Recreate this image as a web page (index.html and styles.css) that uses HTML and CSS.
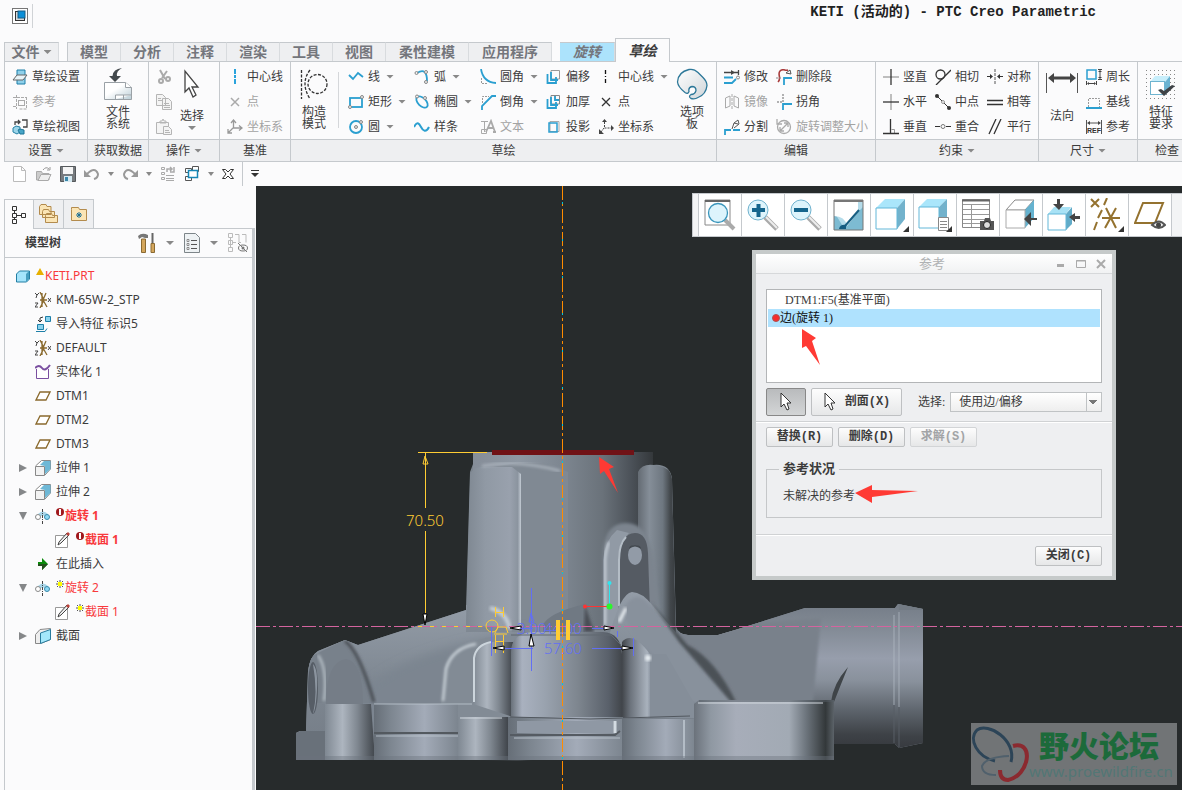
FILE: index.html
```html
<!DOCTYPE html>
<html lang="zh-CN">
<head>
    <meta charset="UTF-8">
    <meta name="viewport" content="width=device-width, initial-scale=1.0">
    <title>KETI (活动的) - PTC Creo Parametric</title>
    <link rel="stylesheet" href="styles.css">
</head>
<body>
    <header class="titlebar">
        <div class="app-icon">
            <svg width="16" height="16" viewBox="0 0 16 16"><rect x=".5" y=".5" width="15" height="15" fill="#fff" stroke="#777"/><rect x="3.5" y="3.5" width="9" height="9" fill="#d5d8da" stroke="#333"/><rect x="6" y="3" width="7" height="7" fill="#0b8fd8" stroke="#155c86"/></svg>
        </div>
        <h1>KETI (活动的) - PTC Creo Parametric</h1>
    </header>

    <!-- Ribbon tabs -->
    <nav class="tabs">
        <button class="tab tab-file">文件<i class="caret"></i></button>
        <div class="tab-set">
            <button class="tab">模型</button>
            <button class="tab">分析</button>
            <button class="tab">注释</button>
            <button class="tab">渲染</button>
            <button class="tab">工具</button>
            <button class="tab">视图</button>
            <button class="tab tab-wide">柔性建模</button>
            <button class="tab tab-wide">应用程序</button>
        </div>
        <button class="tab tab-context">旋转</button>
        <button class="tab tab-active">草绘</button>
    </nav>

    <main>
    <div class="ribbon">
        <section class="group">
            <div class="group-body">
                <div class="col">
                    <button class="cmd"><svg viewBox="0 0 16 16"><path d="M5 1h8v14H5z" fill="#8fd0ea" stroke="#1d7fa8"/><path d="M1 11 5 6h10l-4 5z" fill="#e8f4f8" stroke="#666"/></svg>草绘设置</button>
                    <button class="cmd" disabled><svg viewBox="0 0 16 16" fill="none" stroke="#aaa"><path d="M4.500 1v14M1 3.500h14M1 12.500h3M14.500 3v12h-7" stroke-dasharray="3 1"/><rect x="6.500" y="6.500" width="6" height="5"/></svg>参考</button>
                    <button class="cmd"><svg viewBox="0 0 16 16"><path d="M10 1h5v7h-4M3 6V3h5M6 1l2 2-2 2" fill="none" stroke="#444" stroke-width="1.300"/><path d="m1 9 3-2 4 1v5l-3 2-4-2z" fill="#9cd5e9" stroke="#2480a5"/><path d="m6 11 2-1 4 1v4H8z" fill="#48a5c7" stroke="#1d7598"/></svg>草绘视图</button>
                </div>
            </div>
            <footer>设置<i class="caret"></i></footer>
        </section>

        <section class="group">
            <div class="group-body center">
                <button class="big"><svg width="28" height="32" viewBox="0 0 28 32"><defs><linearGradient id="sheet" x1="0" y1="0" x2="1" y2="1"><stop offset=".4" stop-color="#fff"/><stop offset="1" stop-color="#b9cdd6"/></linearGradient></defs><path d="M.5 14.500h21l6 5v12H.5z" fill="url(#sheet)" stroke="#9aa1a6"/><path d="M21.500 14.500v5h6M11.500 31v-4h16M19.500 27v4" fill="#fff" stroke="#9aa1a6"/><path d="M18 0Q9 1 8.500 8H5l6 6 6-6h-4Q12 3 18 0" fill="#42484c"/></svg><span>文件<br>系统</span></button>
            </div>
            <footer>获取数据</footer>
        </section>

        <section class="group">
            <div class="group-body pair">
                <div class="col">
                    <button class="cmd" disabled aria-label="剪切"><svg viewBox="0 0 16 16" fill="none" stroke="#aaa" stroke-width="2"><path d="M4 1l5 9M11 2 6 9"/><circle cx="5" cy="12" r="2"/><circle cx="12" cy="10" r="2"/></svg></button>
                    <button class="cmd" disabled aria-label="复制"><svg viewBox="0 0 16 16" fill="#f4f4f4" stroke="#b5b5b5"><path d="M.5.5h6l3 3v8h-9zM6.500 4.500h6l3 3v8h-9z"/><path d="M8 9.500h5M8 11.500h6M8 13.500h6M2 4.500h3M2 6.500h4"/></svg></button>
                    <button class="cmd" disabled aria-label="粘贴"><svg viewBox="0 0 16 16" fill="#f4f4f4" stroke="#b5b5b5"><path d="M.5 3.500h12v11H.5zM4 4V2h2l1-2 1 2h2v2z"/><path d="M7.500 7.500h5l3 3v5h-8zM9 11.500h4M9 13.500h5"/></svg></button>
                </div>
                <button class="big"><svg width="18" height="32" viewBox="0 0 18 32"><path d="M2 3v21l4-4 4 9 3-2-4-8h6z" fill="#fff" stroke="#444" stroke-width="1.300"/></svg><span class="one-line">选择</span><i class="caret"></i></button>
            </div>
            <footer>操作<i class="caret"></i></footer>
        </section>

        <section class="group">
            <div class="group-body">
                <div class="col">
                    <button class="cmd"><svg viewBox="0 0 16 16"><path d="M8 0v16" stroke="#2aa3dc" stroke-width="2" stroke-dasharray="5 1 3 1"/></svg>中心线</button>
                    <button class="cmd" disabled><svg viewBox="0 0 16 16"><path d="m4 4 8 8m0-8-8 8" stroke="#aaa" stroke-width="1.500"/></svg>点</button>
                    <button class="cmd" disabled><svg viewBox="0 0 16 16" fill="none" stroke="#999" stroke-width="1.300"><path d="M6.500 1v8H15M6 9l-5 5M4 4l2.500-3L9 4M12 6.500 15 9l-3 2.500M1 10v4h4"/></svg>坐标系</button>
                </div>
            </div>
            <footer>基准</footer>
        </section>

        <section class="group">
            <div class="group-body sketch">
                <button class="big"><svg width="28" height="32" viewBox="0 0 28 32" fill="none" stroke="#333" stroke-width="1.300" stroke-dasharray="3 1.500"><path d="M1.500 2v29"/><path d="M10 2Q0 15 10 31"/><circle cx="17.500" cy="16" r="9.500"/></svg><span>构造<br>模式</span></button>
                <div class="divider"></div>
                <div class="cols">
                    <div class="col">
                        <button class="cmd"><svg viewBox="0 0 16 16" fill="none" stroke="#2b9fd0" stroke-width="1.800"><path d="m1 6 4 4 5-6 5 4"/></svg>线<i class="caret"></i></button>
                        <button class="cmd"><svg viewBox="0 0 16 16" fill="none" stroke="#2b9fd0" stroke-width="1.800"><rect x="2" y="4" width="12" height="9"/><g fill="#eee" stroke="#888" stroke-width="1"><circle cx="2" cy="13" r="1.500"/><circle cx="14" cy="3" r="1.500"/></g></svg>矩形<i class="caret"></i></button>
                        <button class="cmd"><svg viewBox="0 0 16 16" fill="none" stroke="#2b9fd0" stroke-width="1.800"><circle cx="8" cy="8" r="6"/><g fill="#ddd" stroke="#888" stroke-width="1"><circle cx="8" cy="8" r="1.500"/><circle cx="13" cy="3" r="1.500"/></g></svg>圆<i class="caret"></i></button>
                    </div>
                    <div class="col">
                        <button class="cmd"><svg viewBox="0 0 16 16" fill="none" stroke="#2b9fd0" stroke-width="1.800"><path d="M3 4q10-6 10 8"/><g fill="#eee" stroke="#888" stroke-width="1"><circle cx="2.500" cy="4" r="1.500"/><circle cx="12" cy="3" r="1.500"/><circle cx="12" cy="13" r="1.500"/></g></svg>弧<i class="caret"></i></button>
                        <button class="cmd"><svg viewBox="0 0 16 16" fill="none" stroke="#2b9fd0" stroke-width="1.800"><ellipse cx="8" cy="8" rx="7" ry="4" transform="rotate(45 8 8)"/><g fill="#eee" stroke="#888" stroke-width="1"><circle cx="3" cy="2.500" r="1.500"/><circle cx="11" cy="4" r="1.500"/></g></svg>椭圆<i class="caret"></i></button>
                        <button class="cmd"><svg viewBox="0 0 16 16" fill="none" stroke="#2b9fd0" stroke-width="2"><path d="M0 8c3-6 5-4 7 0s5 6 8 0"/></svg>样条</button>
                    </div>
                    <div class="col">
                        <button class="cmd"><svg viewBox="0 0 16 16" fill="none"><path d="M1.500 9v5.500H8" stroke="#999" stroke-dasharray="2 1"/><path d="M1 0q2 13 15 14" stroke="#2b9fd0" stroke-width="1.800"/></svg>圆角<i class="caret"></i></button>
                        <button class="cmd"><svg viewBox="0 0 16 16" fill="none"><path d="M2.500 9V2.500H9" stroke="#999" stroke-dasharray="2 1"/><path d="M2 16v-4L12 2h4" stroke="#2b9fd0" stroke-width="1.800"/></svg>倒角<i class="caret"></i></button>
                        <button class="cmd" disabled><svg viewBox="0 0 16 16" fill="none" stroke="#aaa"><path d="M1 2.500h7M4.500 3v10M1.500 10.500h5v4h-5z"/><path d="m6 13 5-11 4 11M8 9h5M13 13h3" stroke-width="1.800"/></svg>文本</button>
                    </div>
                    <div class="col">
                        <button class="cmd"><svg viewBox="0 0 16 16" fill="none"><path d="M5 1.500h8.500V10H5z" stroke="#999"/><path d="M5 3v8h7M1.500 5v9H10V8" stroke="#2b9fd0" stroke-width="1.800"/></svg>偏移</button>
                        <button class="cmd"><svg viewBox="0 0 16 16" fill="none"><path d="M5 1.500h8.500V10H5zM9 1v5h4" stroke="#888"/><path d="M5 3v8h7M1.500 5v9H10V8M9 2v4h4" stroke="#2b9fd0" stroke-width="1.800"/></svg>加厚</button>
                        <button class="cmd"><svg viewBox="0 0 16 16" fill="none"><path d="M4 2.500h9v10H4z" stroke="#aaa"/><path d="M3 4h8v9H3z" stroke="#2b9fd0" stroke-width="1.500"/></svg>投影</button>
                    </div>
                    <div class="col">
                        <button class="cmd"><svg viewBox="0 0 16 16"><path d="M7.500 1v14" stroke="#111" stroke-width="1.300" stroke-dasharray="4 2 1 2"/></svg>中心线<i class="caret"></i></button>
                        <button class="cmd"><svg viewBox="0 0 16 16"><path d="m4 4 8 8m0-8-8 8" stroke="#333" stroke-width="1.300"/></svg>点</button>
                        <button class="cmd"><svg viewBox="0 0 16 16" fill="none" stroke="#444"><path d="M6.500 3v6H13M6 9l-3 4" stroke-dasharray="2 1"/><path d="m4 3 2.500-3L9 3zm9 3 3 3-3 3zM1 10v5h5z" fill="#444" stroke="none"/></svg>坐标系</button>
                    </div>
                </div>
                <button class="big"><svg width="32" height="32" viewBox="0 0 32 32"><defs><linearGradient id="palette" x2="1" y2="1"><stop stop-color="#fff"/><stop offset="1" stop-color="#cfd5d9"/></linearGradient></defs><path d="M13 1.500q5-1 9 3l5 5q4 4 4 8-1 9-9 12-3 2-7 1-3-2 0-4 4 0 5-4 0-4-4-4-4 1-3 5-1 3-4 1Q2 19 1.500 14 2 4 13 1.500z" fill="url(#palette)" stroke="#2d7899" stroke-width="1.300"/></svg><span>选项<br>板</span></button>
            </div>
            <footer>草绘</footer>
        </section>

        <section class="group">
            <div class="group-body">
                <div class="cols">
                    <div class="col">
                        <button class="cmd"><svg viewBox="0 0 16 16" fill="none"><path d="M0 3.500h15M14.500 1v5" stroke="#444" stroke-width="1.300"/><path d="m7 1 4 2.500L7 6z" fill="#444"/><path d="M0 8.500h9M0 14h8l4-4" stroke="#2b9fd0" stroke-width="1.800"/><circle cx="14" cy="8.500" r="1.500" stroke="#888"/></svg>修改</button>
                        <button class="cmd" disabled><svg viewBox="0 0 16 16" fill="none" stroke="#aaa"><path d="M1.500 4 6 2v10l-4.500 2zM10 2l4.500 2v10L10 12z"/><path d="M8 0v16" stroke-dasharray="3 1"/></svg>镜像</button>
                        <button class="cmd"><svg viewBox="0 0 16 16" fill="none"><path d="M1 16v-5h6M9 11h7" stroke="#2b9fd0" stroke-width="1.800"/><path d="m8 10 2-6 4-3 1 4-5 4M10 4l4 1" stroke="#555"/></svg>分割</button>
                    </div>
                    <div class="col">
                        <button class="cmd"><svg viewBox="0 0 16 16" fill="none"><path d="M2 13C6 9 1 5 4 2s5 0 8-1" stroke="#a83b3b" stroke-width="1.600"/><path d="m10 4 4-3 1 4z" stroke="#555"/><path d="M8 16V9h8" stroke="#2b9fd0" stroke-width="1.800"/><path d="M0 9h6" stroke="#888" stroke-dasharray="2 1"/></svg>删除段</button>
                        <button class="cmd"><svg viewBox="0 0 16 16" fill="none"><path d="M7 0v8H0" stroke="#999" stroke-width="1.500" stroke-dasharray="2 1"/><path d="M7 16v-6h9" stroke="#2b9fd0" stroke-width="1.800"/></svg>拐角</button>
                        <button class="cmd" disabled><svg viewBox="0 0 16 16" fill="none" stroke="#aaa" stroke-width="1.300"><circle cx="8" cy="8" r="6.500"/><path d="M1 0v5h5M4 12l8-8M8 4h4v4M4 8v4h4"/></svg>旋转调整大小</button>
                    </div>
                </div>
            </div>
            <footer>编辑</footer>
        </section>

        <section class="group">
            <div class="group-body">
                <div class="cols">
                    <div class="col">
                        <button class="cmd"><svg viewBox="0 0 16 16"><path d="M0 8h16" stroke="#aaa" stroke-width="1.500"/><path d="M8 0v16" stroke="#333" stroke-width="1.300"/></svg>竖直</button>
                        <button class="cmd"><svg viewBox="0 0 16 16"><path d="M8 0v16" stroke="#aaa" stroke-width="1.500"/><path d="M0 8h16" stroke="#333" stroke-width="1.300"/></svg>水平</button>
                        <button class="cmd"><svg viewBox="0 0 16 16" fill="none"><path d="M8.500 10.500h3V14" stroke="#999"/><path d="M7.500 0v14M0 14.500h16" stroke="#333" stroke-width="1.300"/></svg>垂直</button>
                    </div>
                    <div class="col">
                        <button class="cmd"><svg viewBox="0 0 16 16" fill="none" stroke="#333" stroke-width="1.300"><circle cx="5.500" cy="5.500" r="4.500"/><path d="M1 16 16 1"/></svg>相切</button>
                        <button class="cmd"><svg viewBox="0 0 16 16" fill="#333"><path d="m2 2 12 12" stroke="#333"/><circle cx="2" cy="2" r="2"/><circle cx="14" cy="14" r="2"/><circle cx="8" cy="8" r="1.500" fill="#eee" stroke="#999"/></svg>中点</button>
                        <button class="cmd"><svg viewBox="0 0 16 16" fill="none"><path d="M0 7.500h5m6 0h5" stroke="#333"/><circle cx="8" cy="7.500" r="2" stroke="#777"/></svg>重合</button>
                    </div>
                    <div class="col">
                        <button class="cmd"><svg viewBox="0 0 16 16"><path d="M8 0v16" stroke="#555" stroke-dasharray="3 1"/><path d="M0 7.500h5M16 7.500h-5" stroke="#333"/><path d="m3 5 3 2.500L3 10zm10 0-3 2.500L13 10z" fill="#333"/></svg>对称</button>
                        <button class="cmd"><svg viewBox="0 0 16 16"><path d="M0 6.500h16M0 10.500h16" stroke="#333" stroke-width="1.300"/></svg>相等</button>
                        <button class="cmd"><svg viewBox="0 0 16 16"><path d="M2 15 9 0M7 15l7-15" stroke="#333" stroke-width="1.300"/></svg>平行</button>
                    </div>
                </div>
            </div>
            <footer>约束<i class="caret"></i></footer>
        </section>

        <section class="group">
            <div class="group-body pair">
                <button class="big"><svg width="32" height="32" viewBox="0 0 32 32"><path d="M.5 5v20M31.500 5v20" stroke="#555"/><path d="M6 10h20" stroke="#444" stroke-width="3"/><path d="m2 10 6-5v10zm28 0-6-5v10z" fill="#444"/></svg><span class="one-line">法向</span></button>
                <div class="col">
                    <button class="cmd"><svg viewBox="0 0 16 16" fill="none"><rect x="1" y="1" width="9" height="9" stroke="#2b9fd0" stroke-width="1.500"/><path d="M12 .5h4M12 10.500h4M14 2v7M.5 12v4M10.500 12v4M2 14.500h7" stroke="#444"/><path d="m12 3 2-2 2 2zm0 5 2 2 2-2zM3 13l-2 1.500L3 16zm5 0 2 1.500L8 16z" fill="#444"/></svg>周长</button>
                    <button class="cmd"><svg viewBox="0 0 16 16" fill="none"><path d="M2.500 13V4.500h11V13" stroke="#999" stroke-dasharray="2 1"/><path d="M0 14h16" stroke="#2b9fd0" stroke-width="2"/></svg>基线</button>
                    <button class="cmd"><svg viewBox="0 0 16 16"><path d="M.5 1v14M15.500 1v14M3 4h10" stroke="#555"/><path d="m1 4 3-2v4zm14 0-3-2v4z" fill="#444"/><text x="8" y="14" text-anchor="middle" class="icon-text">REF</text></svg>参考</button>
                </div>
            </div>
            <footer>尺寸<i class="caret"></i></footer>
        </section>

        <section class="group group-last">
            <div class="group-body center">
                <button class="big"><svg width="30" height="32" viewBox="0 0 30 32"><g stroke="#888" stroke-dasharray="1 3"><path d="M0 2.500h30M0 6.500h30M0 10.500h30M0 14.500h30M0 18.500h30M0 22.500h30M0 26.500h30M0 30.500h30"/></g><path d="m4 14 5-6h15l-5 6z" fill="#c7eefb"/><path d="m19 14 5-6v14l-5 5z" fill="#69b3d2"/><rect x="4.500" y="13.500" width="14" height="13" fill="#fff" stroke="#6db3cf"/><path d="m12 22 6 6L29 18l-3-1-8 6-3-2z" fill="#3f4347"/></svg><span>特征<br>要求</span></button>
            </div>
            <footer>检查</footer>
        </section>
    </div>

    <!-- Quick access toolbar -->
    <div class="quickbar">
        <button aria-label="新建"><svg width="16" height="16" viewBox="0 0 16 16"><path d="M1.500.5h8l4 4v11h-12zM9.500.5v4h4" fill="#fff" stroke="#bbb"/></svg></button>
        <button aria-label="打开"><svg width="16" height="16" viewBox="0 0 16 16"><path d="M.5 14V5.500h5l1 2H13V14z" fill="#ccc" stroke="#aaa"/><path d="m2 14.500 3-6h10l-3 6z" fill="#eee" stroke="#aaa"/><path d="M7 4q3-4 6-1m1-2v3h-3" fill="none" stroke="#999"/></svg></button>
        <button aria-label="保存"><svg width="16" height="16" viewBox="0 0 16 16"><path d="M.5.5h15v15H.5z" fill="#777b7f" stroke="#55595c"/><path d="M3 1h10v7H3z" fill="#f5f5f5"/><path d="M4 10h8v6H4z" fill="#d6e9f1"/><path d="M5 11h3v4H5z" fill="#3a87aa"/></svg></button>
        <button aria-label="撤消"><svg width="16" height="16" viewBox="0 0 16 16"><path d="M3 8q8-8 11 0 0 4-4 5" fill="none" stroke="#999" stroke-width="2"/><path d="M0 4v7h7z" fill="#999"/></svg></button>
        <i class="caret"></i>
        <button aria-label="重做"><svg width="16" height="16" viewBox="0 0 16 16"><path d="M13 8Q5 0 2 8q0 4 4 5" fill="none" stroke="#999" stroke-width="2"/><path d="M16 4v7H9z" fill="#999"/></svg></button>
        <i class="caret"></i>
        <button aria-label="重新生成"><svg width="16" height="16" viewBox="0 0 16 16" fill="none" stroke="#aaa"><path d="M1.500 1.500h3v2h-3zM1.500 6.500h3v2h-3zM1.500 11.500h3v2h-3zM6 9.500h8M6 12.500h8M6 14.500h8"/><path d="M7 6V3h4M10 1l2 2-2 2M14 1v5h-4" stroke-width="1.500"/></svg></button>
        <button aria-label="窗口"><svg width="16" height="16" viewBox="0 0 16 16" fill="#fff" stroke="#555"><path d="M1.500 2.500h6v4h-6zM8.500.5h6v5h-6zM1.500 10.500h6v4h-6z"/><path d="M4.500 4.500h9v7h-9z" stroke="#1686b5" stroke-width="1.500"/></svg></button>
        <i class="caret"></i>
        <button aria-label="关闭"><svg width="12" height="12" viewBox="0 0 12 12"><path d="M.5 1.500h3L6 4l2.500-2.500h3L8 6l3.500 4.500h-3L6 8l-2.500 2.500h-3L4 6z" fill="#fff" stroke="#333"/></svg></button>
        <button class="customize" aria-label="自定义"><svg width="8" height="8" viewBox="0 0 8 8"><path d="M0 .5h8" stroke="#333"/><path d="M0 3h8L4 7z" fill="#333"/></svg></button>
    </div>

    <div class="workspace">
        <aside class="sidebar">
            <div class="side-tabs">
                <button class="on" aria-label="模型树"><svg width="14" height="18" viewBox="0 0 14 18" fill="none" stroke="#333"><path d="M.5.5h4v4h-4zM.5 7.500h4v4h-4zM.5 13.500h4v4h-4zM9.500 7.500h4v4h-4zM2.500 5v3M2.500 12v1M5 9.500h4"/></svg></button>
                <button aria-label="文件夹浏览器"><svg width="20" height="20" viewBox="0 0 20 20" fill="#fbe5b5" stroke="#b38b4d"><path d="M.5 2.500 2 .5h5l1 2h4v8H.5zM3.500 7.500l1-2h5l1 2h5v6h-12zM6.500 11.500l1-2h5l1 2h5v7h-12z"/></svg></button>
                <button aria-label="收藏夹"><svg width="18" height="18" viewBox="0 0 18 18"><path d="M1.500 4.500v-2h7l1 2h7v11h-15z" fill="#fbe5b5" stroke="#b38b4d"/><path d="M9 7v6M6 10h6M7 8l4 4m0-4-4 4" stroke="#1d6f94"/></svg></button>
            </div>
            <div class="tree-head">
                <h2>模型树</h2>
                <button aria-label="设置"><svg width="18" height="20" viewBox="0 0 18 20"><path d="M0 3q4-4 10-1v3H7L4 4 1 6z" fill="#777"/><path d="M3.500 6h4v13.500h-4z" fill="#d4a65c" stroke="#8a6a32"/><path d="M14.500 0v10" stroke="#666" stroke-width="2"/><path d="M13 10.500h3.500v9H13z" fill="#d4a65c" stroke="#8a6a32"/></svg></button>
                <i class="caret"></i>
                <button aria-label="显示"><svg width="16" height="20" viewBox="0 0 16 20"><path d="M.5.500h11l4 4v15H.5z" fill="#eef2f4" stroke="#7d8589"/><path d="M7 7.500h6M7 11.500h6M7 15.500h6" stroke="#555"/><path d="M3 6.500h2v2H3zM3 10.500h2v2H3zM3 14.500h2v2H3z" fill="#fff" stroke="#666" stroke-width=".7"/></svg></button>
                <i class="caret"></i>
                <button aria-label="过滤器"><svg width="20" height="20" viewBox="0 0 20 20" fill="none" stroke="#bbb"><path d="M.5.5h4v4h-4zM.5 7.500h4v4h-4zM.5 14.500h4v4h-4zM2.500 5v9M5 9.500h3M7 1.500h4v8h2M14 1.500h4v8"/><ellipse cx="15" cy="15" rx="4.500" ry="3" stroke="#777"/><circle cx="15" cy="15" r="1.500" fill="#777" stroke="none"/><path d="m10 10 9 9" stroke="#777"/></svg></button>
            </div>

            <svg class="sprite" width="0" height="0" aria-hidden="true">
                <symbol id="csys" viewBox="0 0 16 16"><path d="m5 0 4 8-4 8M11 1 8 8l4 7M5 8h7M7 1v14" fill="none" stroke="#8a6a2e" stroke-width="1.300"/><path d="m0 1 2 2 2-2M2 3 1 6M0 11h3l-3 4h3M13 6l3 4M16 6l-3 4" fill="none" stroke="#444"/></symbol>
                <symbol id="plane" viewBox="0 0 16 16"><path d="M5 4h10l-4 8H1z" fill="#fff" stroke="#8a6a2e" stroke-width="1.300"/></symbol>
                <symbol id="extrude" viewBox="0 0 16 16"><path d="m.5 6 6-5.500h9V9L10 15" fill="#fff" stroke="#888"/><path d="M5 5 9 1h6.500v8L10 14V6z" fill="#6eb8d6"/><path d="M.5 6.500h9v9h-9z" fill="#f2f2f2" stroke="#888"/></symbol>
                <symbol id="revolve" viewBox="0 0 16 16"><path d="M3 6q5-5 10 0v4q-5-5-10 0z" fill="#a9d5e8"/><circle cx="3" cy="9" r="2.500" fill="#fff" stroke="#888"/><circle cx="12" cy="9" r="2.500" fill="#8dd8f3" stroke="#3889aa"/><path d="M7.500 1v15" stroke="#444" stroke-dasharray="3 1 1 1"/></symbol>
                <symbol id="section" viewBox="0 0 16 16"><path d="M.5 3.500h12v12H.5z" fill="#fff" stroke="#999"/><path d="m3 13 1-3 8-9 2 2-8 8z" fill="#eee" stroke="#444"/><path d="m11 2 2-2 2 2-2 2z" fill="#b9423b"/></symbol>
                <symbol id="error" viewBox="0 0 8 8"><circle cx="4" cy="4" r="4" fill="#a0181c"/><path d="M3 1h2v6H3z" fill="#fff"/></symbol>
                <symbol id="fresh" viewBox="0 0 8 8"><path d="M4 0v8M0 4h8M1 1l6 6M7 1 1 7" stroke="#555"/><path d="M2 2h4v4H2z" fill="#ff0"/></symbol>
            </svg>

            <ul class="tree">
                <li class="root red"><svg class="ico" viewBox="0 0 16 16"><path d="m1.500 6 3-3h10v8l-3 3h-10z" fill="#a4e4fb" stroke="#237ea3"/><path d="m11 6 3-3v8l-3 3z" fill="#469ebf"/></svg><svg class="badge" viewBox="0 0 8 8"><path d="M4 0 8 7H0z" fill="#e7b000"/></svg>KETI.PRT</li>
                <li class="leaf"><svg class="ico"><use href="#csys"/></svg>KM-65W-2_STP</li>
                <li class="leaf"><svg class="ico" viewBox="0 0 16 16"><path d="M10.500.500h5v5h-5zM2.500 8.500h6v5h-6z" fill="#8bd2ed" stroke="#1d7fa8"/><path d="M1 15.500h9l2-3" fill="none" stroke="#1d7fa8"/><path d="M8 1 5 2v4M3 4l2 2 2-2" fill="none" stroke="#333"/></svg>导入特征 标识5</li>
                <li class="leaf"><svg class="ico"><use href="#csys"/></svg>DEFAULT</li>
                <li class="leaf"><svg class="ico" viewBox="0 0 16 16"><path d="M1.500 5v9.500h12V5" fill="#fff" stroke="#7a4fa0"/><path d="M0 4q4-4 7 0t8-3" fill="none" stroke="#7a4fa0" stroke-width="2"/></svg>实体化 1</li>
                <li class="leaf"><svg class="ico"><use href="#plane"/></svg>DTM1</li>
                <li class="leaf"><svg class="ico"><use href="#plane"/></svg>DTM2</li>
                <li class="leaf"><svg class="ico"><use href="#plane"/></svg>DTM3</li>
                <li class="node"><i class="closed"></i><svg class="ico"><use href="#extrude"/></svg>拉伸 1</li>
                <li class="node"><i class="closed"></i><svg class="ico"><use href="#extrude"/></svg>拉伸 2</li>
                <li class="node red bold"><i class="open"></i><svg class="ico"><use href="#revolve"/></svg><svg class="badge"><use href="#error"/></svg>旋转 1</li>
                <li class="child red bold"><svg class="ico"><use href="#section"/></svg><svg class="badge"><use href="#error"/></svg>截面 1</li>
                <li class="leaf"><svg class="ico" viewBox="0 0 16 16"><path d="M3 6h4V2l6 6-6 6v-4H3z" fill="#0a8a0a"/><path d="M3 8h10l-6 6v-4H3z" fill="#23501c"/></svg>在此插入</li>
                <li class="node red"><i class="open"></i><svg class="ico"><use href="#revolve"/></svg><svg class="badge"><use href="#fresh"/></svg>旋转 2</li>
                <li class="child red"><svg class="ico"><use href="#section"/></svg><svg class="badge"><use href="#fresh"/></svg>截面 1</li>
                <li class="node"><i class="closed"></i><svg class="ico" viewBox="0 0 16 16"><path d="M.5 6.500 5 1.500 15.500.5v11L5.500 15.500h-5z" fill="#eee" stroke="#888"/><path d="m5.500 5 10-3.500v10l-10 4z" fill="#a4e8fb" stroke="#287b9c"/></svg>截面</li>
            </ul>
        </aside>

        <div class="viewport">
            <svg class="scene" viewBox="256 186 926 604" preserveAspectRatio="xMinYMin slice">
                <defs>
                    <linearGradient id="neck"><stop stop-color="#858d98"/><stop offset=".25" stop-color="#8f98a3"/><stop offset=".5" stop-color="#7d8690"/><stop offset=".72" stop-color="#6a727a"/><stop offset=".88" stop-color="#4b5158"/><stop offset="1" stop-color="#34383b"/></linearGradient>
                    <linearGradient id="block"><stop stop-color="#7e8791"/><stop offset=".35" stop-color="#9099a4"/><stop offset=".8" stop-color="#99a1ad"/><stop offset=".94" stop-color="#8b949f"/><stop offset="1" stop-color="#c4ccd5"/></linearGradient>
                    <linearGradient id="boss"><stop stop-color="#646b73"/><stop offset=".3" stop-color="#858e98"/><stop offset=".65" stop-color="#6e7780"/><stop offset=".85" stop-color="#42474b"/><stop offset="1" stop-color="#373b3e"/></linearGradient>
                    <linearGradient id="pipe" x2="0" y2="1"><stop stop-color="#737b85"/><stop offset=".2" stop-color="#838b96"/><stop offset=".4" stop-color="#979eac"/><stop offset=".55" stop-color="#89919c"/><stop offset=".75" stop-color="#5e656d"/><stop offset=".92" stop-color="#3e4247"/><stop offset="1" stop-color="#373a3f"/></linearGradient>
                    <linearGradient id="body" x2="0" y2="1"><stop stop-color="#939ca7"/><stop offset=".5" stop-color="#7e8791"/><stop offset="1" stop-color="#747c86"/></linearGradient>
                    <linearGradient id="dome"><stop stop-color="#69717a"/><stop offset=".1" stop-color="#a9b1bf"/><stop offset=".3" stop-color="#9aa3af"/><stop offset=".6" stop-color="#7e868f"/><stop offset=".88" stop-color="#59606a"/><stop offset="1" stop-color="#41454a"/></linearGradient>
                    <linearGradient id="column"><stop stop-color="#41454a"/><stop offset=".3" stop-color="#6c737c"/><stop offset=".9" stop-color="#a9b2bd"/><stop offset="1" stop-color="#9099a5"/></linearGradient>
                    <linearGradient id="cyl"><stop stop-color="#7f8892"/><stop offset=".35" stop-color="#adb5bf"/><stop offset=".65" stop-color="#7f8790"/><stop offset="1" stop-color="#40454b"/></linearGradient>
                    <linearGradient id="base"><stop stop-color="#666e77"/><stop offset=".2" stop-color="#7d8690"/><stop offset=".6" stop-color="#a3abb8"/><stop offset="1" stop-color="#7c858f"/></linearGradient>
                    <linearGradient id="drum"><stop stop-color="#6b727b"/><stop offset=".12" stop-color="#8f98a2"/><stop offset=".3" stop-color="#a7adb9"/><stop offset=".68" stop-color="#a2aab4"/><stop offset=".8" stop-color="#6d757d"/><stop offset=".94" stop-color="#33383a"/><stop offset="1" stop-color="#5c6369"/></linearGradient>
                    <filter id="soft"><feGaussianBlur stdDeviation="1.500"/></filter>
                    <filter id="softer"><feGaussianBlur stdDeviation="5"/></filter>
                    <clipPath id="outline"><path d="M296 760V733l4-2h6l2-60q2-15 10-20l27-11 13 5 108-35 4-138 3-8v-12h180v13q17-2 19 14l4 148q2 7 12 8h30l17-5 70-22h90l3-4 25 5v134l-24 5-4-4h-61v18z"/></clipPath>
                </defs>

                <!-- Pump housing -->
                <g clip-path="url(#outline)">
                    <path d="M296 452h627v308H296z" fill="#7c858f"/>
                    <path d="M340 605h180v155H296V640z" fill="url(#body)"/>
                    <path d="M676 600h219v146H690z" fill="url(#pipe)"/>
                    <path d="M676 630q40 8 80-8l65-4-8 84H730z" fill="#79818b" filter="url(#soft)"/>
                    <path d="M831 702q2-18 17-35-7 17-14 35z" fill="#3f4448"/>
                    <path d="M893 600h30v148h-30z" fill="url(#pipe)"/>
                    <path d="M899 602h24v8h-24z" fill="#737b84"/>
                    <path d="M894 615v90M899 612v95" stroke="#b4bec7" stroke-width="1" opacity=".7"/>
                    <path d="M894 705v38M899 707v40" stroke="#565d64" stroke-width="1"/>
                    <path d="M473 452h180v178H473z" fill="url(#neck)"/>
                    <path d="M473 472q40-12 75-8l20 8v160H466z" fill="#808993"/>
                    <path d="M466 625l4-150q3-8 12-8h30l9 7v155z" fill="url(#block)"/>
                    <path d="M482 466q37-7 78 5" stroke="#b4bcc5" stroke-width="2" fill="none" filter="url(#soft)"/>
                    <path d="M638 610V472q5-10 20-6 12 1 14 12l4 160z" fill="url(#boss)"/>
                    <path d="M603 630v-76q1-31 23-31 25 0 29 45l7 60z" fill="#7b848e" filter="url(#soft)"/>
                    <path d="M603 630v-70q2-20 14-30l12 3q-11 10-11 27v70z" fill="#919aa5"/>
                    <path d="M605 625v-66q1-10 4-17" stroke="#d5dde4" stroke-width="2" fill="none" filter="url(#soft)"/>
                    <path d="M620 612v-50q0-29 15-29 12 0 13 20l2 59z" fill="#555b63"/>
                    <path d="M619 606v-46q0-16 7-23" stroke="#b4bdc6" stroke-width="2" fill="none"/>
                    <ellipse cx="635" cy="555" rx="7" ry="10" fill="#929ba7"/>
                    <path d="M629 549q6-5 12 0 0-4-6-4t-6 4z" fill="#444a50"/>
                    <path d="M543 625q5-12 42-21v28h-42z" fill="#707983"/>
                    <path d="M585 605l9 27h-10z" fill="#484d54" filter="url(#soft)"/>
                    <path d="M608 640q12-47 24-48 10 0 21 14l82 96v58H600z" fill="url(#body)"/>
                    <path d="M622 612q13-28 30-4l36 40 46 56h-35q-15 0-35-40l-26-22z" fill="#88919c" filter="url(#soft)"/>
                    <path d="M651 602l37 43q28 15 48 57h-5l-52-60z" fill="#4b5157" filter="url(#soft)"/>
                    <path d="M619 622l7-14" stroke="#eef3f7" stroke-width="3" filter="url(#soft)"/>
                    <path d="M490 608q17 4 20 22" stroke="#c6cfd7" stroke-width="4" fill="none" filter="url(#soft)"/>
                    <path d="M340 720q35-65 165-84l18-7v131z" fill="#7c8590" filter="url(#softer)"/>
                    <path d="M441 704l3-35q5-27 55-33h23v82h-71z" fill="#828b95"/>
                    <path d="M443 701l3-32q6-21 30-25" stroke="#dce4ea" stroke-width="2" fill="none" filter="url(#soft)"/>
                    <path d="M473 704v-45q2-16 20-17h20v75z" fill="url(#cyl)"/>
                    <path d="M474 702v-44q2-13 17-16" stroke="#ccd5dc" stroke-width="2" fill="none"/>
                    <path d="M511 720v-68q0-18 21-20h71q18 1 19 22v66z" fill="url(#dome)"/>
                    <path d="M518 658h28" stroke="#f1f5fa" stroke-width="5" filter="url(#soft)"/>
                    <path d="M511 635h100l10 10" stroke="#616871" fill="none"/>
                    <path d="M622 718v-76q10-12 28 12v64z" fill="url(#column)"/>
                    <path d="M650 718v-64l16 0 28 49v15z" fill="#858e99"/>
                    <circle cx="648" cy="658" r="3" fill="#eaf0f4" filter="url(#soft)"/>
                    <path d="M344 640q13 7 30 63h-66V658z" fill="#78818b"/>
                    <path d="M345 641q14 9 29 61" stroke="#464b51" stroke-width="3" fill="none" filter="url(#soft)"/>
                    <path d="M318 655q10 15 6 46" stroke="#c4cdd4" stroke-width="2" fill="none" filter="url(#soft)"/>
                    <ellipse cx="313" cy="688" rx="5" ry="26" fill="#565d66"/>
                    <path d="M313 664q5 5 4 25t-4 25q5-20 0-50z" fill="#8b949f"/>
                    <path d="M326 704q0-42 20-45 17 3 17 45z" fill="#757d87"/>
                    <path d="M296 760v-27l4-2h25v29z" fill="#69717a"/>
                    <path d="M325 704h46l4 56h-50z" fill="url(#cyl)"/>
                    <path d="M374 704h84v56h-84z" fill="url(#base)"/>
                    <path d="M374 704h98M376 736h82" stroke="#c0c8d1" opacity=".8"/>
                    <path d="M374 733h84" stroke="#53595f" stroke-width="2"/>
                    <path d="M458 717h50v43h-50z" fill="url(#cyl)"/>
                    <path d="M460 718h42" stroke="#d0d7de"/>
                    <path d="M508 717h115v43H508z" fill="url(#base)"/>
                    <path d="M517 721h96v12h-96z" fill="#8f98a4"/>
                    <path d="M510 717l80 2 100-3" stroke="#52585f" fill="none"/>
                    <path d="M510 735h105l5-4" stroke="#555b62" stroke-width="2" fill="none"/>
                    <path d="M514 738h106" stroke="#b7c0c9"/>
                    <path d="M615 721v12" stroke="#d3dbe2" stroke-width="3"/>
                    <path d="M622 719h73v41h-73z" fill="url(#base)"/>
                    <path d="M684 720v38" stroke="#b3bcc6" stroke-width="2"/>
                    <path d="M694 760v-56l5-4h135v60z" fill="url(#drum)"/>
                    <path d="M698 703h125" stroke="#d4dae0"/>
                    <path d="M699 701h135" stroke="#555c64"/>
                    <path d="M296 756h538v4H296z" fill="#6c747d" opacity=".4"/>
                </g>

                <!-- Reference lines and dimensions -->
                <path d="M492 452.500h142" stroke="#701216" stroke-width="5"/>
                <path d="M562.500 186v604" stroke="#ff8c00" stroke-dasharray="14 3 3 3"/>
                <path d="M562.500 202v588" stroke="#00c8d8" stroke-dasharray="2 35"/>
                <path d="M256 626.500h926" stroke="#d4649f" stroke-dasharray="14 3 3 3"/>
                <g stroke="#fc3" fill="none">
                    <path d="M418 452.500h69M425.500 453v55M425.500 531v82M423 464l2-8 3 8z"/>
                    <path d="M418 626.500h70" stroke-dasharray="4 8"/>
                    <circle cx="492" cy="626" r="6"/>
                    <path d="M495.500 607v10M503.500 607v10M495 612.500h8M495.500 635v18M503.500 635v18M495 641.500h8M494 634h13M495 633l3-6h8l2 6"/>
                </g>
                <g stroke="#626ff4">
                    <path d="M491.500 627v29M531.500 588v83M505 648.500h28M592 648.500h34M633.500 638v18M515 628.500h18M592 628.500h14M617.500 631v6"/>
                    <path d="M529 622l2-9 3 9z" fill="none"/>
                </g>
                <g fill="#fff" stroke="#000">
                    <path d="m425 625-2-11h4zM531 634l-2 12h5zM510 628l11-2v4zM614 628l-10-2v4zM493 648l11-2v4zM633 648l-11-2v4z"/>
                </g>
                <g class="dim">
                    <text x="406" y="526" fill="#ffcc33">70.50</text>
                    <text x="517" y="634" fill="#626ff4">3.00</text>
                    <text x="544" y="634" fill="#626ff4">44.00</text>
                    <text x="544" y="654" fill="#626ff4">57.60</text>
                </g>
                <path d="M556 620h4v20h-4zM566 620h4v20h-4z" fill="#fc3"/>
                <path d="M609.500 583v24" stroke="#2ee6ee"/><path d="M585 606.500h24" stroke="#f33"/>
                <circle cx="609.500" cy="583" r="2" fill="#2ee6ee"/><circle cx="585" cy="606.500" r="2" fill="#f33"/><circle cx="609.500" cy="606.500" r="3" fill="#2cf52c"/>
                <path d="m599 457 15 10-5 2 9 24-14-22-4 3z" fill="#ff3a34"/>
            </svg>

            <div class="viewbar">
                <button aria-label="重新调整"><svg width="32" height="32" viewBox="0 0 32 32"><path d="M1 1h25v25H1z" fill="#fff" stroke="#888"/><path d="M1 2h25" stroke="#666" stroke-width="2"/><path d="m21 21 9 9" stroke="#aaa" stroke-width="4"/><circle cx="14" cy="14" r="9.500" fill="#ddf4fc" stroke="#3995bb" stroke-width="1.300"/></svg></button>
                <button aria-label="放大"><svg width="32" height="32" viewBox="0 0 32 32"><path d="m18 18 12 12" stroke="#aaa" stroke-width="5"/><path d="m19 18 11 11" stroke="#eee" stroke-width="2"/><circle cx="11" cy="11" r="10" fill="#ddf4fc" stroke="#70b2ce"/><path d="M5 11h13M11.500 5v13" stroke="#14658d" stroke-width="4"/></svg></button>
                <button aria-label="缩小"><svg width="32" height="32" viewBox="0 0 32 32"><path d="m18 18 12 12" stroke="#aaa" stroke-width="5"/><path d="m19 18 11 11" stroke="#eee" stroke-width="2"/><circle cx="11" cy="11" r="10" fill="#ddf4fc" stroke="#70b2ce"/><path d="M4 11h14" stroke="#14658d" stroke-width="4"/></svg></button>
                <button aria-label="重画"><svg width="32" height="32" viewBox="0 0 32 32"><path d="M1 1h29v30H1z" fill="#7dbbd2"/><path d="M1 3v10l10 16L27 11l3-3V3z" fill="#b5dcea"/><path d="M1 3h24v10Q14 3 1 13z" fill="#fff"/><path d="M1 12Q14 1 26 12L14 27Q12 17 1 17z" fill="#fff"/><path d="M1 1h29v30H1z" fill="none" stroke="#777"/><path d="M1 2h29" stroke="#777" stroke-width="2"/><path d="M26 11 12 27" stroke="#185f82" stroke-width="2"/><path d="M6 30q1-5 7-4v4z" fill="#145b80"/></svg></button>
                <button aria-label="显示样式"><svg width="34" height="34" viewBox="0 0 34 34"><path d="m1 10 9-9h20l-8 9z" fill="#aae6fb"/><path d="m22 10 8-9v20l-8 10z" fill="#72b2cc"/><path d="M1 10h21v21H1z" fill="#fff" stroke="#62b7d8"/><path d="M34 28v6h-6z" fill="#333"/></svg></button>
                <button aria-label="已保存方向"><svg width="34" height="34" viewBox="0 0 34 34"><path d="m1 9 8-8h20l-8 8z" fill="#aae6fb"/><path d="m21 9 8-8v20l-8 10z" fill="#72b2cc"/><path d="M1 9h20v21H1z" fill="#fff" stroke="#62b7d8"/><path d="M20.500 19.500h10v13h-10z" fill="#fff" stroke="#888"/><path d="M22 23.500h7M22 26.500h7M22 29.500h7" stroke="#888"/><path d="M34 28v6h-6z" fill="#333"/></svg></button>
                <button aria-label="视图管理器"><svg width="32" height="32" viewBox="0 0 32 32"><path d="M.5.500h27v28H.5z" fill="#fff" stroke="#888"/><path d="M0 1.500h28" stroke="#666" stroke-width="2"/><path d="M1 5.500h26M1 10.500h26M1 15.500h26M1 20.500h26M1 24.500h26M9.500 5v23" stroke="#999"/><path d="M18 22h4l1-3h5l1 3h3v9H18z" fill="#555"/><circle cx="25" cy="26" r="3.500" fill="#ddd" stroke="#222"/></svg></button>
                <button aria-label="剖面"><svg width="32" height="32" viewBox="0 0 32 32"><path d="m1 11 9-10h19l-9 10z" fill="#fff" stroke="#888"/><path d="m20 11 9-10v18l-9 10z" fill="#65b2cf"/><path d="M1 11h19v18H1z" fill="#fff" stroke="#aaa"/><path d="M19 20 26 13v6h6v2h-6v6z" fill="#444"/></svg></button>
                <button aria-label="3D 方向"><svg width="34" height="32" viewBox="0 0 34 32"><path d="m1 15 6-7h17l-5 7z" fill="#a8e2f5"/><path d="m19 15 6-7v17l-6 6z" fill="#61abc8"/><path d="M1 15h18v16H1z" fill="#fff" stroke="#62b7d8"/><path d="M10 0h3v5h4l-5 6-6-6h4zM33 17h-5v-3l-6 4 6 5v-3h5z" fill="#444"/></svg></button>
                <button aria-label="基准显示"><svg width="34" height="34" viewBox="0 0 34 34"><path d="m1 1 8 8m0-8L1 9M17 0l-3 7M12 12l-4 8M7 24l-3 8M12 20h18M16 10l10 20M26 10 15 30" stroke="#94722f" stroke-width="2"/><path d="M34 28v6h-6z" fill="#333"/></svg></button>
                <button aria-label="平面显示"><svg width="32" height="32" viewBox="0 0 32 32"><path d="M9 4h20l-8 20H1z" fill="#fff" stroke="#94722f" stroke-width="2"/><path d="M18 26q7-7 13 0-6 6-13 0z" fill="#eee" stroke="#555" stroke-width="2"/><circle cx="24.500" cy="26" r="2.500" fill="#444"/></svg></button>
            </div>

            <section class="dialog">
                <div class="dialog-title">
                    <h2>参考</h2>
                    <div class="window-buttons">
                        <button aria-label="最小化"><svg width="10" height="10" viewBox="0 0 10 10"><path d="M1 6.500h7" stroke="#aaa" stroke-width="3"/></svg></button>
                        <button aria-label="最大化"><svg width="10" height="10" viewBox="0 0 10 10"><path d="M.5 1.500h9v7h-9zM0 2h10" fill="none" stroke="#aaa"/></svg></button>
                        <button aria-label="关闭窗口"><svg width="10" height="10" viewBox="0 0 10 10"><path d="m1 1 8 8m0-8L1 9" stroke="#aaa" stroke-width="2"/></svg></button>
                    </div>
                </div>
                <div class="dialog-part">
                    <ul class="refs">
                        <li>DTM1:F5(基准平面)</li>
                        <li class="picked"><i class="dot"></i>边(旋转 1)</li>
                    </ul>
                    <div class="row">
                        <button class="btn tall pressed" aria-label="选择参考"><svg width="14" height="20" viewBox="0 0 14 20"><path d="M2 1v14l3-3 3 6 2-1-2-6h4z" fill="#fff" stroke="#333"/></svg></button>
                        <button class="btn tall section"><svg width="14" height="20" viewBox="0 0 14 20"><path d="M2 1v14l3-3 3 6 2-1-2-6h4z" fill="#fff" stroke="#333"/></svg>剖面(X)</button>
                        <label for="pick-mode">选择:</label>
                        <select id="pick-mode"><option>使用边/偏移</option></select>
                    </div>
                </div>
                <div class="dialog-part">
                    <div class="row">
                        <button class="btn">替换(R)</button>
                        <button class="btn">删除(D)</button>
                        <button class="btn" disabled>求解(S)</button>
                    </div>
                    <fieldset>
                        <legend>参考状况</legend>
                        <p>未解决的参考</p>
                    </fieldset>
                </div>
                <div class="dialog-part dialog-foot">
                    <button class="btn">关闭(C)</button>
                </div>
                <svg class="marks" width="364" height="330" viewBox="0 0 364 330"><path d="m50 79 14 9-4 3 8 24-14-19-4 2zM103 243l17-8v5l46 1-46 6v6z" fill="#ff3a34"/></svg>
            </section>

            <div class="watermark">
                <svg width="60" height="58" viewBox="0 0 60 58" fill="none"><path d="M40 37C46 15 17-3 6 5-3 14 6 32 24 36" stroke="#2c4457" stroke-width="3"/><path d="M38 31q-23 1-27 10 0 9 14 9" stroke="#50606c" stroke-width="2"/><path d="M42 21c22-6 16 30-5 34q-8 0-8-10" stroke="#8b2a30" stroke-width="4"/></svg>
                <div>
                    <strong>野火论坛</strong>
                    <span>www.proewildfire.cn</span>
                </div>
            </div>
        </div>
    </div>
    </main>
</body>
</html>
```

FILE: styles.css
```css
* {
    box-sizing: border-box;
}
body {
    margin: 0;
    min-height: 100vh;
    display: flex;
    flex-direction: column;
    overflow: hidden;
    background-color: #fbfbfc;
    color: #3c3c3c;
    font-family: "Noto Sans", "Noto Sans CJK SC", sans-serif;
    font-size: 12px;
    line-height: 16px;
}
main {
    flex: 1;
    display: flex;
    flex-direction: column;
}
button {
    margin: 0;
    padding: 0;
    border: none;
    background: none;
    color: inherit;
    font: inherit;
}
svg {
    display: block;
    flex: none;
}
h1, h2, ul, p {
    margin: 0;
    padding: 0;
    font-size: 12px;
    list-style: none;
}
.caret {
    flex: none;
    width: 8px;
    height: 4px;
    background-color: #888;
    clip-path: polygon(0 0, 100% 0, 50% 100%);
}

/* Title bar */
.titlebar {
    display: flex;
    justify-content: space-between;
    height: 38px;
    padding: 4px 86px 0 12px;
}
.app-icon {
    height: 24px;
    padding: 4px 4px 0 0;
    border-right: 1px solid #d0d3d6;
}
.titlebar h1 {
    font-family: "Liberation Mono", "Noto Sans CJK SC", monospace;
    font-size: 14px;
    color: #222;
}

/* Tabs */
.tabs {
    display: flex;
    align-items: flex-end;
    gap: 8px;
    height: 23px;
    padding-left: 4px;
}
.tab-set {
    display: flex;
    border-left: 1px solid #c5c9cd;
}
.tab {
    width: 53px;
    height: 19px;
    border-top: 1px solid #c5c9cd;
    border-right: 1px solid #d8dbde;
    background-color: #eeeff1;
    color: #74767c;
    font-size: 14px;
    font-weight: bold;
    line-height: 18px;
}
.tab-wide {
    width: 83px;
}
.tab-file {
    display: flex;
    align-items: center;
    justify-content: center;
    gap: 4px;
    width: 55px;
    border-left: 1px solid #c5c9cd;
}
.tab-context {
    width: 55px;
    background-color: #ace3fc;
    font-style: italic;
}
.tab-active {
    position: relative;
    z-index: 1;
    width: 55px;
    height: 24px;
    margin: 0 0 -1px -8px;
    border: 1px solid #c5c9cd;
    border-bottom: none;
    background-color: #fbfbfc;
    color: #3c3c3c;
    font-style: italic;
}

/* Ribbon */
.ribbon {
    display: grid;
    grid-template-columns: 83px 61px 71px 71px 426px 159px 163px 99px minmax(44px, 1fr);
    margin-left: 4px;
    border-top: 1px solid #c5c9cd;
    border-bottom: 1px solid #c5c9cd;
}
.group {
    display: flex;
    flex-direction: column;
    min-width: 0;
    border-left: 1px solid #c5c9cd;
}
.group-body {
    display: flex;
    height: 77px;
    padding: 2px 0 0 7px;
}
.group-body.center {
    justify-content: center;
    padding-left: 0;
}
.group-body.pair {
    gap: 8px;
}
.group-body.sketch {
    padding-left: 9px;
}
.group footer {
    display: flex;
    align-items: center;
    justify-content: center;
    gap: 4px;
    height: 22px;
    border-top: 1px solid #c5c9cd;
    background-color: #eeeff1;
    white-space: nowrap;
}
.group-last .center {
    justify-content: flex-start;
    padding-left: 8px;
}
.group-last footer {
    justify-content: flex-start;
    padding-left: 17px;
}
.cols {
    display: flex;
    gap: 8px;
}
.col {
    display: flex;
    flex-direction: column;
}
.cmd {
    display: flex;
    align-items: center;
    gap: 4px;
    height: 25px;
    white-space: nowrap;
}
.cmd svg {
    width: 16px;
    height: 16px;
}
.cmd .caret {
    margin-left: 2px;
}
.cmd:disabled {
    color: #a3a3a3;
}
.big {
    display: flex;
    flex-direction: column;
    align-items: center;
    gap: 6px;
    padding-top: 4px;
    line-height: 12px;
    white-space: nowrap;
}
.one-line {
    padding-top: 4px;
}
.big .caret {
    margin-top: -2px;
}
.divider {
    width: 1px;
    height: 56px;
    margin: 8px 9px 0 10px;
    background-color: #d5d7da;
}
.sketch .cols {
    margin-right: 8px;
}
.icon-text {
    font-family: "Liberation Sans", sans-serif;
    font-size: 7px;
    font-weight: bold;
    fill: #333;
}

/* Quick access toolbar */
.quickbar {
    display: flex;
    align-items: center;
    gap: 8px;
    height: 24px;
    padding-left: 12px;
}
.quickbar .caret {
    width: 6px;
}
.customize {
    display: flex;
    align-items: center;
    height: 24px;
    padding-left: 8px;
    border-left: 1px solid #c5c9cd;
}

/* Model tree */
.workspace {
    flex: 1;
    display: flex;
}
.sidebar {
    flex: none;
    display: flex;
    flex-direction: column;
    width: 256px;
    padding: 13px 1px 0 4px;
}
.side-tabs {
    display: flex;
}
.side-tabs button {
    display: flex;
    align-items: center;
    justify-content: center;
    width: 30px;
    height: 29px;
    border: 1px solid #c5c9cd;
    border-left: none;
    border-bottom: none;
    background-color: #eeeff1;
}
.side-tabs .on {
    position: relative;
    height: 30px;
    margin-bottom: -1px;
    border-left: 1px solid #c5c9cd;
    background-color: #fbfbfc;
}
.tree-head {
    display: flex;
    align-items: center;
    gap: 10px;
    height: 30px;
    padding: 0 4px 0 20px;
    border: 1px solid #c5c9cd;
    border-right-width: 3px;
}
.tree-head h2 {
    flex: 1;
}
.sprite {
    position: absolute;
}
.tree {
    flex: 1;
    padding: 6px 0 0 10px;
    border-left: 1px solid #c5c9cd;
    border-right: 3px solid #c5c9cd;
}
.tree li {
    display: flex;
    align-items: center;
    gap: 5px;
    height: 24px;
}
.tree .leaf {
    padding-left: 20px;
}
.tree .node {
    padding-left: 4px;
}
.tree .child {
    padding-left: 40px;
}
.tree .ico {
    width: 16px;
    height: 16px;
}
.tree .badge {
    width: 8px;
    height: 8px;
    margin: 0 -4px 8px 0;
}
.red {
    color: #f8393c;
}
.bold {
    font-weight: bold;
}
.closed, .open {
    width: 8px;
    height: 8px;
    margin-right: 3px;
    background-color: #858789;
    clip-path: polygon(0 0, 100% 50%, 0 100%);
}
.open {
    clip-path: polygon(0 0, 100% 0, 50% 100%);
}

/* Graphics area */
.viewport {
    position: relative;
    flex: 1;
    min-height: 600px;
    background-color: #272b2c;
    overflow: hidden;
}
.scene {
    position: absolute;
    width: 100%;
    height: 100%;
}
.dim {
    font-family: "Noto Sans", sans-serif;
    font-size: 15px;
    font-weight: 300;
}
.viewbar {
    position: absolute;
    top: 7px;
    right: 0;
    display: flex;
    height: 44px;
    padding: 0 10px 0 5px;
    border: 1px solid #c5c9cd;
    border-right: none;
    background-color: #f3f4f5;
}
.viewbar button {
    display: flex;
    align-items: center;
    justify-content: center;
    width: 43px;
    border-left: 1px solid #c5c9cd;
    background-color: #fff;
}
.viewbar button:last-child {
    width: 44px;
    border-right: 1px solid #c5c9cd;
}

/* Reference dialog */
.dialog {
    position: absolute;
    top: 64px;
    right: 66px;
    width: 364px;
    border: 4px solid #c6caca;
    background-color: #eeeff1;
    font-family: "Liberation Serif", "Noto Sans CJK SC", serif;
}
.dialog-title {
    display: flex;
    align-items: center;
    height: 20px;
    padding: 0 6px;
    border-bottom: 1px solid #d6d8da;
    background: linear-gradient(#fff, #f1f2f3);
}
.dialog-title h2 {
    flex: 1;
    padding-left: 46px;
    color: #b0b2b4;
    font-size: 13px;
    font-weight: normal;
    text-align: center;
}
.window-buttons {
    display: flex;
    gap: 10px;
}
.dialog-part {
    padding: 5px 10px;
    border-bottom: 1px solid #d0d2d4;
    box-shadow: 0 1px 0 #fff;
}
.dialog-title + .dialog-part {
    padding-top: 15px;
}
.refs {
    height: 94px;
    margin-bottom: 5px;
    padding: 1px;
    border: 1px solid #b3b5b7;
    background-color: #fff;
}
.refs li {
    display: flex;
    align-items: center;
    height: 18px;
    padding-left: 17px;
}
.refs .picked {
    padding-left: 4px;
    background-color: #afe2fe;
    color: #111;
}
.dot {
    width: 8px;
    height: 8px;
    border: 1px solid #a55;
    border-radius: 50%;
    background-color: #f72c2c;
}
.row {
    display: flex;
    align-items: center;
    gap: 5px;
}
.row label {
    margin-left: 11px;
}
.row select {
    flex: 1;
    height: 20px;
    padding: 0 8px;
    appearance: none;
    border: 1px solid #c0c3c5;
    border-radius: 0;
    background: conic-gradient(from -45deg at 50% 100%, #777 90deg, transparent 0) right 4px center / 8px 4px no-repeat, linear-gradient(#c0c3c5, #c0c3c5) right 14px top / 1px 100% no-repeat, linear-gradient(#fff, #eee);
    color: inherit;
    font: inherit;
}
.btn {
    display: flex;
    align-items: center;
    justify-content: center;
    gap: 8px;
    width: 67px;
    height: 20px;
    border: 1px solid #bec0c2;
    border-radius: 2px;
    background: linear-gradient(#fdfdfd, #e6e7e8);
    font-family: "Liberation Mono", "Noto Sans CJK SC", monospace;
    font-size: 12px;
    font-weight: bold;
}
.btn:disabled {
    border-color: #d2d4d6;
    color: #a2a4a6;
}
.tall {
    width: 40px;
    height: 28px;
}
.section {
    width: 91px;
}
.pressed {
    border-color: #888;
    background: linear-gradient(#b9bbbd, #d3d5d6);
}
fieldset {
    height: 58px;
    margin: 13px 0 11px;
    padding: 10px 16px 0;
    border: 1px solid #c5c7c9;
}
legend {
    padding: 0 4px;
    margin-left: -4px;
    font-size: 13px;
    font-weight: bold;
    line-height: 18px;
}
.dialog-foot {
    display: flex;
    justify-content: flex-end;
    padding: 11px 10px 10px;
    border-bottom: none;
    box-shadow: none;
}
.marks {
    position: absolute;
    top: -4px;
    left: -4px;
    pointer-events: none;
}

/* Forum stamp */
.watermark {
    position: absolute;
    right: 5px;
    bottom: 5px;
    display: flex;
    align-items: center;
    width: 206px;
    height: 62px;
    background-color: #717476;
}
.watermark div {
    display: flex;
    flex-direction: column;
    margin-left: -2px;
}
.watermark strong {
    padding-left: 10px;
    color: #1c6a3a;
    font-family: "Noto Sans CJK SC", sans-serif;
    font-size: 30px;
    font-weight: 900;
    line-height: 34px;
}
.watermark span {
    color: #527775;
    font-family: "Noto Sans", sans-serif;
    font-size: 15px;
    line-height: 20px;
}
```
